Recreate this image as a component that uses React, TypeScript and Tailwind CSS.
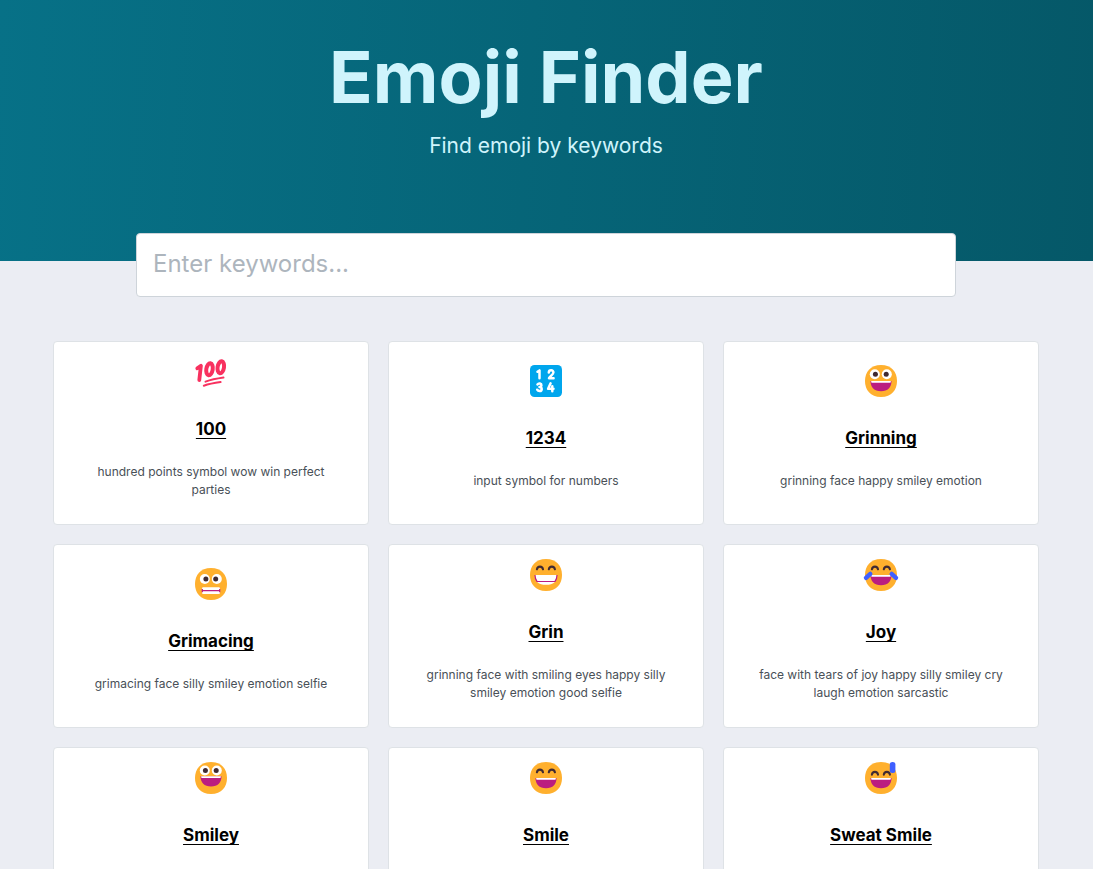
import { useState, type ReactNode } from "react";

const Face = ({ children }: { children: ReactNode }) => (
  <svg viewBox="0 0 32 32" className="size-8 overflow-visible" aria-hidden="true">
    <path d="M16 32C26.7 32 32 24.8 32 16S26.700 0 16 0 0 7.200 0 16S5.300 32 16 32Z" fill="#ffb02e" />
    {children}
  </svg>
);

const RoundEyes = ({ y, inset = 0 }: { y: number; inset?: number }) => (
  <>
    <circle cx="9.8" cy={y} r="5" fill="#fff" />
    <circle cx="21.8" cy={y} r="5" fill="#fff" />
    <circle cx={10.4 + inset} cy={y} r="2.5" fill="#402a32" />
    <circle cx={21.2 - inset} cy={y} r="2.5" fill="#402a32" />
  </>
);

const HappyEyes = ({ y = 7 }: { y?: number }) => (
  <g transform={`translate(0 ${y})`} fill="none" stroke="#402a32" strokeWidth="2.1" strokeLinecap="round">
    <path d="M6.900 3.300C7.500 -0.300 12.400 -0.300 13 3.300M18.800 3.300C19.400 -0.300 24.300 -0.300 24.900 3.300" />
  </g>
);

const OpenMouth = ({ y }: { y: number }) => (
  <g transform={`translate(0 ${y})`}>
    <path d="M5.500 0H26.500C26.500 6.500 22.800 10.300 16 10.300S5.500 6.500 5.500 0Z" fill="#bb1d80" />
    <path d="M6.200 0H25.800V1C25.800 1.500 25.500 1.800 25 1.800H7C6.500 1.800 6.200 1.500 6.200 1Z" fill="#fff" />
  </g>
);

const icons: Record<string, ReactNode> = {
  "100": (
    <svg
      viewBox="0 0 32 32"
      className="size-8 overflow-visible"
      fill="none"
      stroke="#f8315f"
      strokeLinecap="round"
      strokeLinejoin="round"
      aria-hidden="true"
    >
      <path d="M2.300 12.300 5.900 9.800 4.300 24" strokeWidth="3.8" />
      <ellipse cx="14.5" cy="13.300" rx="3.2" ry="6.1" transform="rotate(9 14.5 13.3)" strokeWidth="4" />
      <ellipse cx="25.8" cy="11.300" rx="3.2" ry="6.1" transform="rotate(9 25.8 11.3)" strokeWidth="4" />
      <path d="M10.500 25.600C16 23.800 22 22.600 28.500 21.600M8.800 29.700C14 28 20 26.900 25.600 26.100" strokeWidth="2" />
    </svg>
  ),
  "1234": (
    <svg viewBox="0 0 32 32" className="size-8" aria-hidden="true">
      <rect width="32" height="32" rx="4.5" fill="#00a6ed" />
      <g fill="none" stroke="#fff" strokeWidth="2.5" strokeLinecap="round" strokeLinejoin="round">
        <path d="M7.500 6.800 9.500 5.400V13.200" />
        <path d="M18.800 7.500C18.900 4.400 23.600 4.600 23.400 7.500 23.300 9.500 20.500 10.800 19 13.200H23.600" />
        <path d="M7.500 19.400C8.700 17.700 11.500 18.400 11.400 20.300 11.300 21.700 10.200 22 9.500 22 10.600 22 11.700 22.700 11.700 24.100 11.600 26.600 8.300 26.700 7.200 24.700" />
        <path d="M20.600 18.300 18.100 23.800H23.500M22.300 21.300V26.300" />
      </g>
    </svg>
  ),
  Grinning: <Face><RoundEyes y={9.3} /><OpenMouth y={16} /></Face>,
  Grimacing: (
    <Face>
      <RoundEyes y={11} inset={0.5} />
      <rect x="7" y="19.3" width="18" height="6.7" rx="1.3" fill="#fff" />
      <path d="M7.300 21V24.300M24.700 21V24.300M7.500 22.700H24.500" fill="none" stroke="#bb1d80" strokeWidth="1.2" />
    </Face>
  ),
  Grin: (
    <Face>
      <HappyEyes />
      <path d="M5 16H27C27 22.700 23.500 25.800 16 25.800S5 22.700 5 16Z" fill="#fff" />
      <path d="M5 16C5 18.700 5.700 20.900 7 22.500H25C26.300 20.900 27 18.700 27 16" fill="none" stroke="#bb1d80" strokeWidth="1.2" />
    </Face>
  ),
  Joy: (
    <Face>
      <HappyEyes />
      <OpenMouth y={16} />
      <path d="M5.300 14.900 1 18.800M26.700 14.900 31 18.800" fill="none" stroke="#3f5fff" strokeWidth="4.4" strokeLinecap="round" />
    </Face>
  ),
  Smiley: <Face><RoundEyes y={8.5} /><OpenMouth y={14.3} /></Face>,
  Smile: <Face><HappyEyes /><OpenMouth y={16} /></Face>,
  "Sweat Smile": (
    <Face>
      <HappyEyes y={9.3} />
      <OpenMouth y={16} />
      <rect x="24.8" y="0" width="5.6" height="11" rx="2.5" fill="#3f5fff" />
    </Face>
  ),
};

const emojis = [
  { name: "100", keywords: "hundred points symbol wow win perfect parties" },
  { name: "1234", keywords: "input symbol for numbers" },
  { name: "Grinning", keywords: "grinning face happy smiley emotion" },
  { name: "Grimacing", keywords: "grimacing face silly smiley emotion selfie" },
  { name: "Grin", keywords: "grinning face with smiling eyes happy silly smiley emotion good selfie" },
  { name: "Joy", keywords: "face with tears of joy happy silly smiley cry laugh emotion sarcastic" },
  { name: "Smiley", keywords: "smiling face with open mouth happy smiley emotion good" },
  { name: "Smile", keywords: "smiling face with open mouth and smiling eyes happy smiley" },
  { name: "Sweat Smile", keywords: "smiling face with open mouth and cold sweat smiley emotion" },
];

export default function App() {
  const [query, setQuery] = useState("");
  const words = query.toLowerCase().split(" ").filter(Boolean);
  const shown = emojis.filter((emoji) =>
    words.every((word) => `${emoji.name} ${emoji.keywords}`.toLowerCase().includes(word)),
  );

  return (
    <div className="h-screen overflow-hidden bg-[#ebedf3] font-['Inter',sans-serif]">
      <header className="flex flex-col items-center bg-linear-[93deg] from-[#077187] to-[#055868] pt-8 pr-px text-center text-[#cff4fc]">
        <h1 className="text-[72px] leading-[90px] font-bold">Emoji Finder</h1>
        <p className="mt-2 text-[21px] leading-8">Find emoji by keywords</p>
        <input
          type="search"
          aria-label="Keywords"
          value={query}
          onChange={(event) => setQuery(event.target.value)}
          placeholder="Enter keywords..."
          className="mt-[71px] -mb-9 block h-16 w-full max-w-[820px] rounded-sm border border-[#ced4da] bg-white px-4 pb-1 text-2xl text-[#495057] placeholder:text-[#adb5bd] focus:outline-none"
        />
      </header>
      <main className="grid grid-cols-3 gap-[19px] pt-20 pr-[54px] pl-[53px]">
        {shown.map(({ name, keywords }) => (
          <article
            key={name}
            className="flex min-h-[184px] flex-col items-center justify-center rounded-sm border border-[#dee2e6] bg-white px-8 pt-[14px] pb-[25px] text-center"
          >
            {icons[name]}
            <h2 className="mt-[29px] text-[17px] leading-6 font-bold text-black">
              <a href={`#${name}`} className="underline decoration-1 underline-offset-3 [text-decoration-skip-ink:none]">
                {name}
              </a>
            </h2>
            <p className="mt-[22px] text-xs leading-[18px] text-[#495057]">{keywords}</p>
          </article>
        ))}
      </main>
    </div>
  );
}
